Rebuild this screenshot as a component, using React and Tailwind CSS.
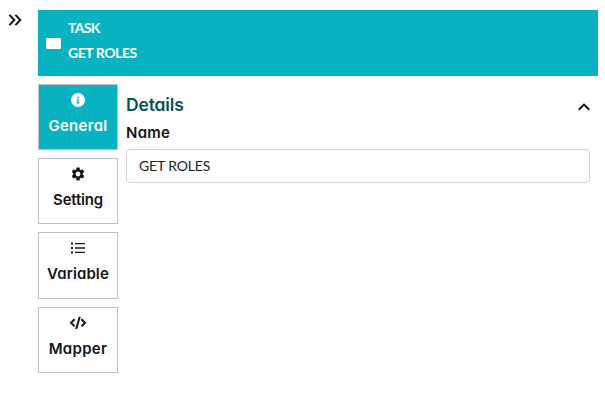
import { MdSettings } from "react-icons/md";
import { FaCircleInfo } from "react-icons/fa6";

function ListIcon() {
  return (
    <svg width="16" height="16" viewBox="0 0 16 16" fill="currentColor">
      <path d="M1 2.6h2v2H1zM1 7h2v2H1zM1 11.4h2v2H1zM5 2.9h10v1.4H5zM5 7.3h10v1.4H5zM5 11.7h10v1.4H5z" />
    </svg>
  );
}

function CodeIcon() {
  return (
    <svg width="18" height="16" viewBox="0 0 18 16" fill="none" stroke="currentColor" strokeWidth="2">
      <path d="M5.6 4.2 2 7.8l3.6 3.6M12.4 4.2 16 7.8l-3.6 3.6M10.8 1.8 7.2 14" />
    </svg>
  );
}

const tabs = [
  { label: "General", icon: <FaCircleInfo size={14} />, active: true, text: "tracking-[0.3px]", box: "h-[66px] mb-2" },
  { label: "Setting", icon: <MdSettings size={16} />, text: "tracking-[-0.2px]", box: "h-[66px] mb-2" },
  { label: "Variable", icon: <ListIcon />, text: "tracking-[0.1px]", box: "h-[67px] mb-2" },
  { label: "Mapper", icon: <CodeIcon />, text: "tracking-[0.3px]", box: "h-[66px]" },
];

export default function App() {
  return (
    <div className="flex h-[401px] w-[605px] overflow-hidden bg-white font-['Inter',sans-serif] text-[#161616] [font-feature-settings:'cv11']">
      <button className="ml-1 mt-[9px] flex h-[22px] w-[22px] shrink-0 items-center justify-center" aria-label="Collapse">
        <svg width="14" height="12" viewBox="0 0 14 12" fill="none" stroke="currentColor" strokeWidth="2">
          <path d="M1.4.9 6.3 6l-4.9 5.1M7.4.9 12.3 6l-4.9 5.1" />
        </svg>
      </button>
      <main className="ml-3 mt-[10px] w-[560px] shrink-0">
        <header className="flex h-[66px] items-center bg-[#08b2c0] pl-2 font-['Lato',sans-serif] text-[14px] font-bold text-white">
          <span className="mr-[7px] h-[11px] w-[15px] rounded-[1px] bg-white" />
          <div className="pb-[7px] leading-[25px]">
            <div className="tracking-[-0.7px]">TASK</div>
            <div className="tracking-[-0.45px]">GET ROLES</div>
          </div>
        </header>
        <div className="mt-2 flex">
          <nav className="w-20">
            {tabs.map((t) => (
              <button
                key={t.label}
                className={`flex w-20 flex-col items-center border border-[#bfbfbf] ${t.box} ${t.active ? "bg-[#08b2c0] text-white" : "bg-white"}`}
              >
                <span className="mt-[6px] flex h-[18px] items-center">{t.icon}</span>
                <span className={`mt-[7px] text-[15px] font-semibold leading-5 ${t.text}`}>{t.label}</span>
              </button>
            ))}
          </nav>
          <section className="ml-2 w-[464px]">
            <div className="mt-2 flex h-6 items-center justify-between">
              <h2 className="pt-0.5 text-[17.5px] font-semibold tracking-[-0.15px] text-[#07515c]">Details</h2>
              <svg width="12" height="8" viewBox="0 0 12 8" fill="none" stroke="currentColor" strokeWidth="2" className="mt-[5px]">
                <path d="M.8 6.8 6 1.6l5.2 5.2" />
              </svg>
            </div>
            <label className="mt-[7px] block text-[15px] font-semibold leading-5 tracking-[0.25px]">Name</label>
            <input
              defaultValue="GET ROLES"
              className="mt-[6px] block h-[34px] w-full rounded-[4px] border border-[#d2d2d2] pb-0.5 pl-3 font-['Lato',sans-serif] text-[14px] tracking-[-0.15px] text-[#222]"
            />
          </section>
        </div>
      </main>
    </div>
  );
}
